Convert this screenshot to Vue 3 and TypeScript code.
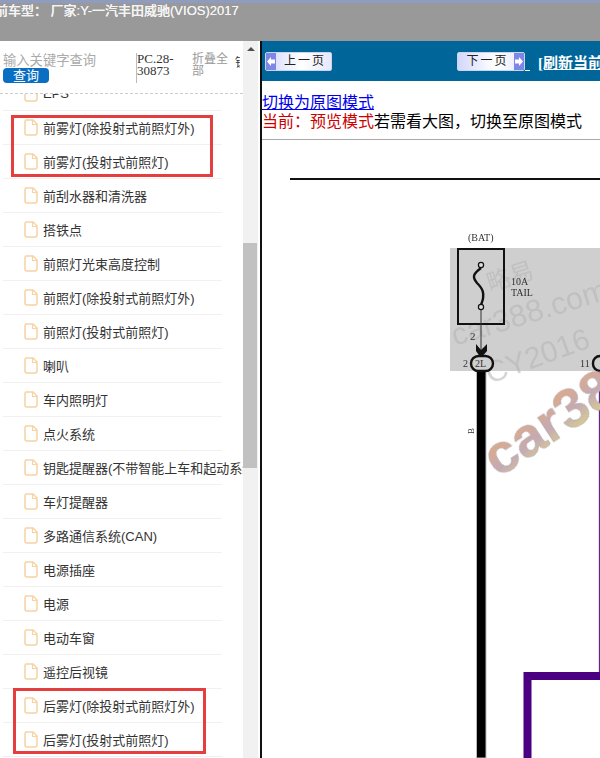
<template>
  <div class="page">
    <div class="top-bar">
      <span class="car-title">前车型： 厂家:Y-一汽丰田威驰(VIOS)2017</span>
    </div>
    <div class="main">
      <div class="side">
        <div class="side-inner">
          <div class="search">
            <div class="search-left">
              <div class="search-hint">输入关键字查询</div>
              <button class="search-btn">查询</button>
            </div>
            <div class="pc-code">PC.28-30873</div>
            <div class="fold">折叠全部</div>
            <div class="cut">锁</div>
          </div>
          <div class="tree">
            <div class="tree-scroll">
              <div v-for="item in items" :key="item" class="tree-row">
                <svg class="file-icon" width="14" height="17" viewBox="0 0 14 17">
                  <path d="M2.5 1H9L13 5V14a2 2 0 0 1-2 2H3a2 2 0 0 1-2-2V2.5A1.5 1.5 0 0 1 2.5 1z" fill="#fff" stroke="#f7d2a2" stroke-width="1.5" />
                  <path d="M8.5 1V5.5H13" fill="none" stroke="#f7d2a2" stroke-width="1.2" />
                </svg>
                <span class="tree-text">{{ item }}</span>
              </div>
            </div>
          </div>
        </div>
        <div class="scrollbar">
          <div class="arrow"></div>
          <div class="thumb"></div>
        </div>
      </div>

      <div class="content">
        <div class="nav">
          <div class="page-btn prev">
            <span class="btn-end">
              <svg width="8" height="9" viewBox="0 0 8 9"><path d="M0 4.5L4 0V2.5H8V6.5H4V9z" fill="#fff" /></svg>
            </span>
            <span class="btn-text">上一页</span>
          </div>
          <div class="page-btn next">
            <span class="btn-text">下一页</span>
            <span class="btn-end">
              <svg width="8" height="9" viewBox="0 0 8 9"><path d="M8 4.5L4 0V2.5H0V6.5H4V9z" fill="#fff" /></svg>
            </span>
          </div>
          <span class="tail"></span>
          <a class="refresh">[刷新当前页]</a>
        </div>
        <div class="mode">
          <a class="mode-link">切换为原图模式</a>
          <div><span class="red">当前：预览模式</span>若需看大图，切换至原图模式</div>
        </div>
        <div class="diagram">
          <svg width="338" height="618" viewBox="262 140 338 618">
            <defs>
              <linearGradient id="wm" x1="0" y1="0" x2="0.3" y2="1">
                <stop offset="0" stop-color="#a9a3b8" />
                <stop offset="0.35" stop-color="#dcaa8c" />
                <stop offset="0.65" stop-color="#c4aab4" />
                <stop offset="1" stop-color="#dcd488" />
              </linearGradient>
              <filter id="soft"><feGaussianBlur stdDeviation="0.35" /></filter>
              <filter id="softer"><feGaussianBlur stdDeviation="0.6" /></filter>
            </defs>
            <line x1="290" y1="179" x2="600" y2="179" stroke="#111" stroke-width="2" />
            <rect x="450" y="248" width="150" height="123" fill="#cfcfcf" />
            <g font-family="'Liberation Sans', sans-serif" fill="#b4b4b4" opacity="0.55">
              <text transform="translate(490 292) rotate(-18)" font-size="24" font-family="'Noto Sans CJK SC', sans-serif">略易</text>
              <text transform="translate(455 346) rotate(-17)" font-size="31">car388.com</text>
              <text transform="translate(490 384) rotate(-20)" font-size="30">CY2016</text>
            </g>
            <g class="wire-text" filter="url(#soft)">
              <text x="468" y="241" font-size="10">(BAT)</text>
              <text x="511" y="285" font-size="10">10A</text>
              <text x="511" y="296" font-size="10">TAIL</text>
              <text x="470" y="340" font-size="11">2</text>
              <text x="463" y="367" font-size="10">2</text>
              <text x="580" y="367" font-size="10">11</text>
              <text transform="translate(474 434) rotate(-90)" font-size="9">B</text>
            </g>
            <rect x="458" y="249" width="46" height="75" fill="none" stroke="#111" stroke-width="2" />
            <path d="M481 268c-8 6-9 9-4 15 5 5 9 10 4 22" fill="none" stroke="#111" stroke-width="2.4" />
            <circle cx="481" cy="265" r="2.6" fill="#ddd" stroke="#111" stroke-width="1.2" />
            <circle cx="481" cy="307" r="2.6" fill="#ddd" stroke="#111" stroke-width="1.2" />
            <line x1="481" y1="310" x2="481" y2="350" stroke="#333" stroke-width="1" />
            <path d="M476 344l5 6 6-6v7l-6 7-5-7z" fill="#111" />
            <rect x="476.5" y="370" width="9.5" height="388" fill="#000" stroke="#bbb" stroke-width="1" />
            <rect x="471" y="356" width="22" height="15" rx="7.5" fill="#cfcfcf" stroke="#111" stroke-width="2.4" />
            <text class="wire-text" x="475" y="367" font-size="10">2L</text>
            <rect x="593" y="356" width="16" height="15" rx="7" fill="#cfcfcf" stroke="#111" stroke-width="2.4" />
            <line x1="599.5" y1="371" x2="599.5" y2="675" stroke="#5b2a8a" stroke-width="1.3" />
            <path d="M600 676H527.5V758" fill="none" stroke="#4b0082" stroke-width="8" />
            <text transform="translate(498 478) rotate(-33)" filter="url(#softer)" font-family="'Liberation Sans', sans-serif" font-weight="700" font-size="56" fill="url(#wm)" stroke="#a39aa3" stroke-width="0.4">car388</text>
          </svg>
        </div>
      </div>
    </div>
    <div class="mark mark-a"></div>
    <div class="mark mark-b"></div>
  </div>
</template>

<script setup lang="ts">
const items: string[] = [
  "EPS",
  "前雾灯(除投射式前照灯外)",
  "前雾灯(投射式前照灯)",
  "前刮水器和清洗器",
  "搭铁点",
  "前照灯光束高度控制",
  "前照灯(除投射式前照灯外)",
  "前照灯(投射式前照灯)",
  "喇叭",
  "车内照明灯",
  "点火系统",
  "钥匙提醒器(不带智能上车和起动系统)",
  "车灯提醒器",
  "多路通信系统(CAN)",
  "电源插座",
  "电源",
  "电动车窗",
  "遥控后视镜",
  "后雾灯(除投射式前照灯外)",
  "后雾灯(投射式前照灯)",
];
</script>

<style>
html,
body {
  margin: 0;
  overflow: hidden;
}
</style>

<style scoped>
.page {
  position: relative;
  width: 600px;
  height: 758px;
  display: flex;
  flex-direction: column;
  overflow: hidden;
  background: #fff;
  font-family: "Liberation Sans", "Noto Sans CJK SC", sans-serif;
}

.top-bar {
  height: 38px;
  flex: none;
  border-top: 3px solid #8f9cc0;
  background: #999;
  overflow: hidden;
}

.car-title {
  display: block;
  margin-left: -5px;
  color: #f4f4f4;
  font-size: 13px;
  font-weight: 500;
  line-height: 15px;
  white-space: nowrap;
  text-shadow: 0 0 0.6px #f4f4f4;
}

.main {
  flex: 1;
  min-height: 0;
  display: flex;
}

.side {
  width: 260px;
  flex: none;
  display: flex;
  background: #fff;
}

.side-inner {
  width: 243px;
  flex: none;
  overflow: hidden;
}

.search {
  height: 53px;
  display: flex;
  border-bottom: 1px dashed #ccc;
  box-sizing: border-box;
  padding-top: 12px;
  overflow: hidden;
}

.search-left {
  width: 136px;
  flex: none;
  padding-left: 3px;
  box-sizing: border-box;
}

.search-hint {
  color: #aaa;
  font-size: 13.3px;
  line-height: 15px;
}

.search-btn {
  display: block;
  width: 46px;
  height: 15px;
  padding: 0;
  border: none;
  border-radius: 4px;
  background: #0a6fc2;
  color: #fff;
  font: 13px/15px "Liberation Sans", "Noto Sans CJK SC", sans-serif;
}

.pc-code {
  width: 56px;
  height: 30px;
  flex: none;
  border-left: 1px solid #bbb;
  color: #333;
  font: 13px/12px "Liberation Serif", serif;
  box-sizing: border-box;
  padding-right: 14px;
}

.fold {
  width: 43px;
  flex: none;
  color: #999;
  font-size: 12px;
  line-height: 12px;
  box-sizing: border-box;
  padding-right: 6px;
}

.cut {
  width: 5px;
  overflow: hidden;
  font-size: 12px;
  line-height: 16px;
  color: #333;
  margin-top: 2px;
}

.tree {
  height: 664px;
  overflow: hidden;
}

.tree-scroll {
  margin-top: -17px;
}

.tree-row {
  height: 33px;
  margin-right: 21px;
  margin-left: 3px;
  display: flex;
  align-items: center;
  border-bottom: 1px solid #f1f1f1;
  white-space: nowrap;
}

.file-icon {
  flex: none;
  margin-left: 21px;
}

.tree-text {
  margin-left: 5px;
  color: #333;
  font-size: 13px;
}

.scrollbar {
  position: relative;
  width: 15px;
  flex: none;
  background: #f1f1f1;
}

.arrow {
  width: 0;
  margin: 6px auto 0;
  border-left: 4px solid transparent;
  border-right: 4px solid transparent;
  border-bottom: 4px solid #505050;
}

.thumb {
  position: absolute;
  top: 202px;
  left: 0;
  width: 14px;
  height: 225px;
  background: #c1c1c1;
}

.content {
  flex: 1;
  min-width: 0;
  border-left: 2px solid #111;
  display: flex;
  flex-direction: column;
  overflow: hidden;
}

.nav {
  height: 40px;
  flex: none;
  display: flex;
  align-items: center;
  background: #006699;
  padding-left: 3px;
  white-space: nowrap;
  box-sizing: border-box;
}

.page-btn {
  height: 19px;
  width: 67px;
  flex: none;
  display: flex;
  align-items: stretch;
  box-sizing: border-box;
  border: 1px solid #c8d4f0;
  border-radius: 2px;
  background: linear-gradient(90deg, #d3d7fb, #fff 55%, #e6e8fc);
  color: #222;
  font-size: 12px;
  line-height: 17px;
}

.next {
  width: 68px;
  margin-left: 125px;
}

.btn-end {
  width: 10px;
  flex: none;
  display: flex;
  align-items: center;
  justify-content: center;
  background: #7f87e6;
}

.btn-text {
  flex: 1;
  text-align: center;
  letter-spacing: 2px;
  padding-left: 3px;
}

.tail {
  width: 5px;
  height: 19px;
  flex: none;
  box-sizing: border-box;
  border-bottom: 1px solid #fff;
}

.refresh {
  margin-left: 8px;
  color: #fff;
  font: bold 15px "Liberation Serif", "Noto Sans CJK SC", serif;
  text-decoration: underline;
  flex: none;
}

.mode {
  height: 59px;
  flex: none;
  box-sizing: border-box;
  padding-top: 12px;
  border-bottom: 1px solid #aaa;
  color: #000;
  font-size: 16px;
  line-height: 19px;
  white-space: nowrap;
}

.mode-link {
  color: #00e;
  text-decoration: underline;
}

.red {
  color: #c00;
}

.diagram {
  flex: 1;
  min-height: 0;
  overflow: hidden;
}

.diagram svg {
  display: block;
}

.wire-text {
  fill: #333;
  font-family: "Liberation Serif", serif;
}

.mark {
  position: absolute;
  box-sizing: border-box;
  border: 3px solid #e53e3e;
}

.mark-a {
  left: 11px;
  top: 115px;
  width: 202px;
  height: 62px;
}

.mark-b {
  left: 13px;
  top: 688px;
  width: 193px;
  height: 66px;
}
</style>
